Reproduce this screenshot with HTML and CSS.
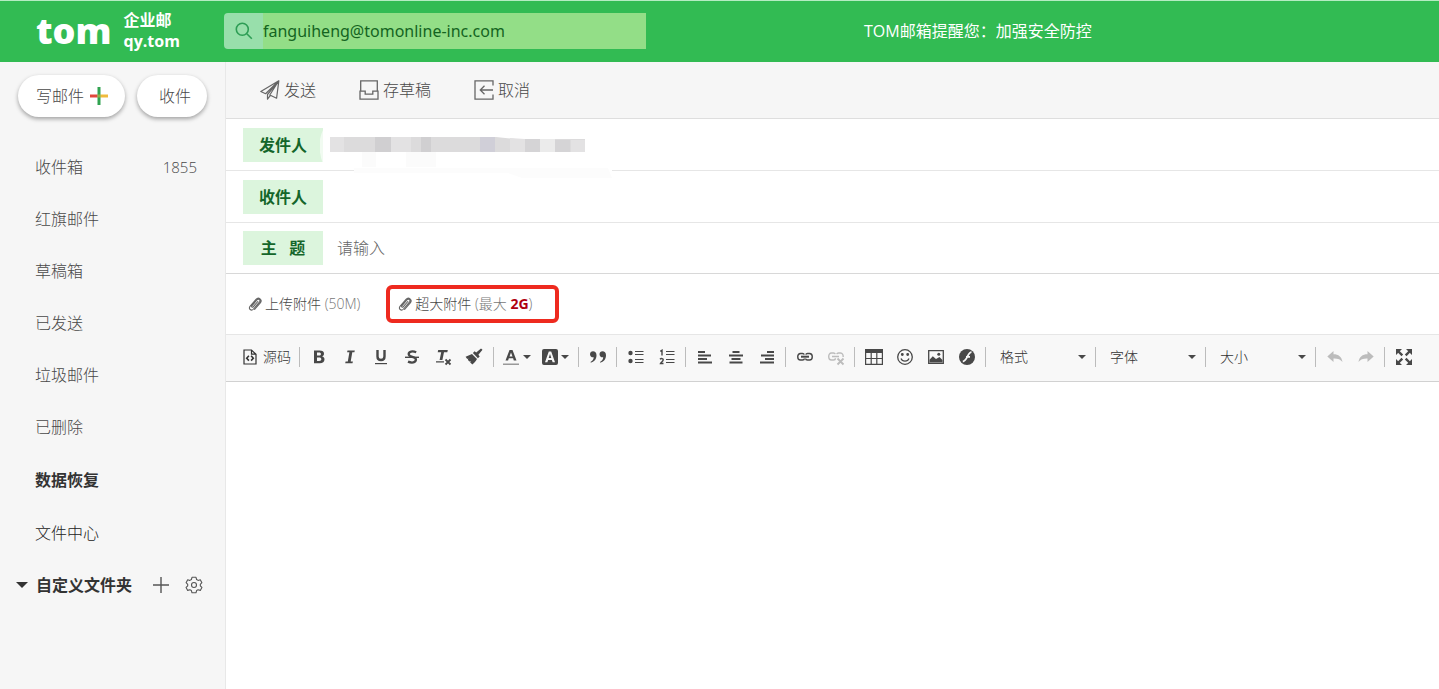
FILE: index.html
```html
<!DOCTYPE html>
<html lang="zh-CN">
<head>
<meta charset="utf-8">
<title>TOM企业邮 - 写邮件</title>
<link rel="stylesheet" href="styles.css">
</head>
<body>
<div class="app">
  <header class="header">
    <a class="brand" href="#">
      <span class="brand-logo">tom</span>
      <span class="brand-name"><span>企业邮</span><span>qy.tom</span></span>
    </a>
    <div class="search">
      <label class="search-icon" for="search">
        <svg width="18" height="18" viewBox="0 0 18 18" fill="none" stroke="currentColor" stroke-width="1.6" role="img" aria-label="搜索"><circle cx="7.3" cy="7.3" r="6"/><path d="M11.8 11.8l5 5"/></svg>
      </label>
      <input class="search-input" id="search" type="text" value="fanguiheng@tomonline-inc.com">
    </div>
    <p class="notice">TOM邮箱提醒您：加强安全防控</p>
  </header>

  <div class="body">
    <aside class="sidebar">
      <div class="side-actions">
        <button class="pill" type="button">写邮件
          <svg width="18" height="18" viewBox="0 0 18 18" aria-hidden="true"><path fill="#31a350" d="M7.5 0h3v18h-3z"/><path fill="#e2473d" d="M0 7.5h7.5v3H0z"/><path fill="#f0bb3c" d="M10.500 7.500h7.500v3h-7.500z"/><path fill="#8fae44" d="M7.500 7.500h3v3h-3z"/></svg>
        </button>
        <button class="pill pill-receive" type="button">收件</button>
      </div>
      <nav class="folders">
        <a class="folder" href="#">收件箱<span class="count">1855</span></a>
        <a class="folder" href="#">红旗邮件</a>
        <a class="folder" href="#">草稿箱</a>
        <a class="folder" href="#">已发送</a>
        <a class="folder" href="#">垃圾邮件</a>
        <a class="folder" href="#">已删除</a>
        <a class="folder folder-strong" href="#">数据恢复</a>
        <a class="folder folder-dark" href="#">文件中心</a>
      </nav>
      <div class="custom">
        <button class="custom-toggle" type="button">
          <svg width="12" height="6" viewBox="0 0 12 6" aria-hidden="true"><path d="M0 0h12L6 6z" fill="currentColor"/></svg>自定义文件夹
        </button>
        <button class="icon-btn" type="button" aria-label="新建文件夹">
          <svg width="16" height="16" viewBox="0 0 16 16" fill="none" stroke="currentColor" stroke-width="1.4"><path d="M8 0v16M0 8h16"/></svg>
        </button>
        <button class="icon-btn" type="button" aria-label="文件夹设置">
          <svg width="18" height="18" viewBox="0 0 18 18" fill="none" stroke="currentColor" stroke-width="1.1" stroke-linejoin="round"><path d="M7 1.300h4l.6 2.200 1.500.9 2.200-.7 1.600 3-1.600 1.600v1.500l1.600 1.600-1.600 3-2.200-.6-1.500.8-.6 2.200H7l-.6-2.200-1.500-.8-2.200.6-1.600-3 1.600-1.600V8.300L1.100 6.700l1.600-3 2.200.7 1.500-.9z"/><circle cx="9" cy="9" r="2.500"/></svg>
        </button>
      </div>
    </aside>

    <main class="main">
      <div class="actions">
        <button class="action" type="button">
          <svg width="20" height="20" viewBox="0 0 20 20" fill="none" stroke="currentColor" stroke-width="1.200" stroke-linejoin="round"><path d="M18.800.8L.8 11.500l4.800 2.200zM18.800.8L7.500 14.500v4.700l2.700-3.500M18.800.8l-2.200 17.400-6.800-3.200z"/></svg>发送
        </button>
        <button class="action" type="button">
          <svg width="20" height="20" viewBox="0 0 20 20" fill="none" stroke="currentColor" stroke-width="1.300"><path d="M1.700 11V.9h16.600V11M1 11.200h5.200v2.900h7.600v-2.900H19v8H1z"/></svg>存草稿
        </button>
        <button class="action" type="button">
          <svg width="20" height="20" viewBox="0 0 20 20" fill="none" stroke="currentColor" stroke-width="1.300"><path d="M19 5.500V.9H1v18.300h18v-4.700M19 10H6.500M10.500 5.800L6.300 10l4.200 4.200"/></svg>取消
        </button>
      </div>

      <div class="field">
        <span class="field-label">发件人</span>
        <svg class="masked" width="300" height="60" viewBox="0 0 300 60" role="img" aria-label="已隐藏的发件地址">
          <path fill="#fff" fill-opacity=".6" d="M3 10q-7 14 0 34z"/>
          <path fill="#fff" d="M34 48h258v6H34z"/>
          <path fill="#fbfbfb" d="M42 31h14v16H42zM86 31h30v16H86z"/>
          <path fill="#fcfcfc" d="M34 48h254l4 10h-90l-14-5H34z"/>
          <path fill="#dcdbdc" d="M10 17h166l20 2h69v13H10z"/>
          <path fill="#e3e2e3" d="M71 17h20v15H71zM10 17h14v15H10z"/>
          <path fill="#d0cfd1" d="M55 17h16v15H55zM101 17h10v15h-10z"/>
          <path fill="#d0cfd8" d="M160 17h15v15h-15z"/>
          <path fill="#e3e2e3" d="M190 18l15 1v13h-15zM251 20h14v12h-14z"/>
          <path fill="#ebebeb" d="M220 19h15v13h-15z"/>
          <path fill="#d5d4d6" d="M205 19h15v13h-15zM235 20h15v12h-15z"/>
        </svg>
      </div>
      <div class="field">
        <label class="field-label" for="to">收件人</label>
        <input class="field-input" id="to" type="text">
      </div>
      <div class="field field-last">
        <label class="field-label" for="subject">主&nbsp;&nbsp;&nbsp;题</label>
        <input class="field-input" id="subject" type="text" placeholder="请输入">
      </div>

      <div class="attachments">
        <button class="attach" type="button">
          <svg width="14" height="16" viewBox="0 0 14 16" fill="none" stroke="currentColor" stroke-width="1.100" stroke-linecap="round"><path d="M9.800 5.500l-4.600 5.300c-.9 1-2.100 0-1.300-1l5-5.800c1.700-1.900 4.100.1 2.500 2.100l-5.900 6.900c-2.200 2.500-5.500-.2-3.500-2.700L8 3.400c2.600-3 6.800.4 4.300 3.500l-5.700 6.600"/></svg>
          <span>上传附件 <span class="muted">(50M)</span></span>
        </button>
        <button class="attach attach-large" type="button">
          <svg width="14" height="16" viewBox="0 0 14 16" fill="none" stroke="currentColor" stroke-width="1.100" stroke-linecap="round"><path d="M9.800 5.500l-4.600 5.300c-.9 1-2.100 0-1.300-1l5-5.800c1.700-1.900 4.100.1 2.500 2.100l-5.900 6.900c-2.200 2.500-5.500-.2-3.500-2.700L8 3.400c2.600-3 6.800.4 4.300 3.500l-5.700 6.600"/></svg>
          <span>超大附件 <span class="muted">(最大 <strong class="limit">2G</strong>)</span></span>
        </button>
      </div>

      <div class="editor-bar">
        <div class="group group-source">
          <button class="tool tool-source" type="button">
            <svg width="14" height="16" viewBox="0 0 14 16" fill="none" stroke="currentColor" stroke-width="1.200"><path d="M1 1h7.500L13 5.200V15H1zM8.500 1v4.200H13"/><path stroke-width="1.600" d="M5.900 6.800L3.700 9.200l2.200 2.400M8.100 6.800l2.200 2.400-2.200 2.400"/></svg>源码
          </button>
        </div>
        <div class="group group-format">
          <button class="tool" type="button" aria-label="加粗"><svg width="16" height="16" viewBox="0 0 16 16"><path fill="currentColor" fill-rule="evenodd" d="M3 1.500h5.500c3 0 4.500 1.200 4.500 3.200 0 1.400-.8 2.300-1.900 2.700 1.500.3 2.400 1.400 2.400 2.900 0 2.600-1.800 3.900-4.700 3.900H3zm3 2.100v3h2c1.300 0 1.900-.5 1.900-1.500S9.300 3.600 8 3.600zm0 5v3.400h2.200c1.400 0 2.100-.6 2.100-1.700 0-1.100-.7-1.700-2.200-1.700z"/></svg></button>
          <button class="tool" type="button" aria-label="倾斜"><svg width="16" height="16" viewBox="0 0 16 16"><path fill="currentColor" d="M5.500 1.500h7.300l-.4 1.800h-2.100L8.700 12.400h2.200l-.4 1.800H3.200l.4-1.800h2.200l1.600-9.100H5.100z"/></svg></button>
          <button class="tool" type="button" aria-label="下划线"><svg width="16" height="16" viewBox="0 0 16 16"><path fill="none" stroke="currentColor" stroke-width="2.400" d="M4.500 1v6.500c0 2.500 1.200 3.500 3.500 3.500s3.500-1 3.500-3.500V1"/><path fill="currentColor" d="M2 14h12v1.200H2z"/></svg></button>
          <button class="tool" type="button" aria-label="删除线"><svg width="16" height="16" viewBox="0 0 16 16"><path fill="none" stroke="currentColor" stroke-width="2.300" d="M12.200 3.200C8.800 1.800 4.700 2.200 4.700 5c0 3.800 7.200 2 7.200 5.600 0 3.200-4.300 3.600-7.900 2"/><path fill="currentColor" d="M1 7.600h14V9H1z"/></svg></button>
          <button class="tool" type="button" aria-label="清除格式"><svg width="18" height="18" viewBox="0 0 18 18"><path fill="currentColor" d="M4.200 2h9.600l-.5 2.200H10L8.400 12H5.600l1.600-7.800H3.700zM2 13.300h8v1.200H2z"/><path fill="none" stroke="currentColor" stroke-width="1.800" d="M11.500 11.500l5 5M16.500 11.500l-5 5"/></svg></button>
          <button class="tool" type="button" aria-label="格式刷"><svg width="18" height="18" viewBox="0 0 18 18" fill="currentColor"><path d="M17.500 1.800L16 .4 11.200 4.600 9.600 3.200 7.900 5l5 5.200 1.800-1.700-1.300-1.700zM7 5.900L.6 8.700l1.600 2.200 1.200-.4-.6 1.200 1.500 1.800 1.500-.6-.7 1.400 2.200 2.300c1.500-1.300 3.400-3.100 4.700-5.600z"/></svg></button>
        </div>
        <div class="group">
          <button class="tool tool-menu" type="button" aria-label="文本颜色"><svg width="18" height="18" viewBox="0 0 18 18"><path fill="currentColor" fill-rule="evenodd" d="M7.500 2h3l4 10.500h-2.700l-.7-2.200H6.800l-.7 2.200H3.500zm1.500 2.600L7.500 8.500h3z"/><path fill="#999" d="M1 15.500h16v1.500H1z"/></svg><span class="caret"></span></button>
          <button class="tool tool-menu" type="button" aria-label="背景颜色"><svg width="16" height="16" viewBox="0 0 16 16"><path fill="currentColor" fill-rule="evenodd" d="M2 0h12q2 0 2 2v12q0 2-2 2H2q-2 0-2-2V2q0-2 2-2zm4.800 2.600L3 13.200h2.400l.7-2.200h3.800l.7 2.200H13L9.200 2.600zM8 5l1.300 4H6.700z"/></svg><span class="caret"></span></button>
        </div>
        <div class="group">
          <button class="tool" type="button" aria-label="块引用"><svg width="18" height="14" viewBox="0 0 18 14" fill="currentColor"><path d="M1 4.200C1 2.400 2.300 1.200 4 1.200c2 0 3.500 1.500 3.500 4.100 0 4-2.400 6.700-5.800 7.500v-1c1.800-.9 2.900-2.200 3-4.500C2.600 7.600 1 6.200 1 4.200zM10.500 4.200c0-1.800 1.300-3 3-3 2 0 3.500 1.500 3.500 4.100 0 4-2.400 6.700-5.800 7.500v-1c1.800-.9 2.900-2.200 3-4.500-2.100.3-3.700-1.100-3.700-3.100z"/></svg></button>
        </div>
        <div class="group">
          <button class="tool" type="button" aria-label="项目列表"><svg width="16" height="14" viewBox="0 0 16 14"><circle cx="2.500" cy="3" r="2.200" fill="currentColor"/><circle cx="2.500" cy="11" r="2.200" fill="currentColor"/><path fill="none" stroke="currentColor" stroke-width="1.100" d="M7 1.500h8.500M7 4.500h8.500M7 9.500h8.500M7 12.500h8.500"/></svg></button>
          <button class="tool" type="button" aria-label="编号列表"><svg width="16" height="16" viewBox="0 0 16 16" fill="none" stroke="currentColor" stroke-width="1.100"><path d="M7 2.500h8.500M7 5.500h8.500M7 10.500h8.500M7 13.500h8.500"/><path stroke-width="1.400" d="M1.300 2.300L3 1.200v5.300M1 10.200c1-1.100 3.400-.8 3.200.7C4 12.400 2 13.200 1.500 14.500h3"/></svg></button>
        </div>
        <div class="group">
          <button class="tool" type="button" aria-label="左对齐"><svg width="16" height="14" viewBox="0 0 16 14" stroke="currentColor" stroke-width="2"><path d="M1 2h7M1 5.500h13M1 9h9M1 12.500h14"/></svg></button>
          <button class="tool" type="button" aria-label="居中"><svg width="16" height="14" viewBox="0 0 16 14" stroke="currentColor" stroke-width="2"><path d="M4.500 2h7M1 5.500h14M3.500 9h9M1.500 12.500h13"/></svg></button>
          <button class="tool" type="button" aria-label="右对齐"><svg width="16" height="14" viewBox="0 0 16 14" stroke="currentColor" stroke-width="2"><path d="M8 2h7M2 5.500h13M6 9h9M1 12.500h14"/></svg></button>
        </div>
        <div class="group">
          <button class="tool" type="button" aria-label="插入链接"><svg width="18" height="18" viewBox="0 0 18 18" fill="none" stroke="currentColor"><path stroke-width="1.400" d="M8.200 6.700C8 5.900 7.400 5.500 6.500 5.500h-2c-3.700 0-3.700 6.500 0 6.500h2c1.200 0 1.900-.5 1.900-1.500M9.800 6.700c.2-.8.8-1.200 1.700-1.200h2c3.700 0 3.700 6.500 0 6.500h-2c-1.200 0-1.900-.5-1.900-1.500"/><path stroke-width="2" d="M5 8.700h8"/></svg></button>
          <button class="tool" type="button" aria-label="取消链接" disabled><svg width="18" height="18" viewBox="0 0 18 18" fill="none" stroke="currentColor"><path stroke-width="1.400" d="M8.200 6.200C8 5.400 7.400 5 6.500 5h-2c-3.700 0-3.700 7 0 7h2c1.200 0 1.900-.7 1.900-1.800M9.800 6.200c.2-.8.8-1.200 1.700-1.200h2c2 0 2.800 2 2.700 4M5 8.500h7"/><path stroke-width="1.800" d="M10.500 10.500l6 6M16.500 10.500l-6 6"/></svg></button>
        </div>
        <div class="group">
          <button class="tool" type="button" aria-label="表格"><svg width="18" height="16" viewBox="0 0 18 16"><path fill="currentColor" d="M0 0h18v4H0z"/><path fill="none" stroke="currentColor" stroke-width="1.200" d="M.6 3v12.400h16.800V3M6.200 4v11M11.800 4v11M0 9.500h18"/></svg></button>
          <button class="tool" type="button" aria-label="表情"><svg width="18" height="18" viewBox="0 0 18 18" fill="none" stroke="currentColor" stroke-width="1.300"><circle cx="9" cy="9" r="7.300"/><path d="M5 10.500c1.300 3.500 6.700 3.500 8 0"/><circle cx="6.300" cy="6.500" r=".8" fill="currentColor"/><circle cx="11.700" cy="6.500" r=".8" fill="currentColor"/></svg></button>
          <button class="tool" type="button" aria-label="图像"><svg width="16" height="14" viewBox="0 0 16 14"><path fill="none" stroke="currentColor" stroke-width="1.300" d="M.7.700h14.600v12.600H.7z"/><path fill="currentColor" d="M1.500 12.500V9.800l3.300-3.500L8 9l3.500-2 3 3v2.500z"/><circle cx="10.800" cy="4.200" r="1.500" fill="currentColor"/></svg></button>
          <button class="tool" type="button" aria-label="Flash"><svg width="16" height="16" viewBox="0 0 16 16"><circle cx="8" cy="8" r="8" fill="currentColor"/><path fill="none" stroke="#f8f8f8" stroke-width="1.800" d="M12.500 3.200C8.500 3.200 8.500 12 3.800 12.500M7 7.800h4"/></svg></button>
        </div>
        <div class="group group-select">
          <select class="picker" aria-label="格式"><option>格式</option></select><span class="caret"></span>
        </div>
        <div class="group group-select">
          <select class="picker" aria-label="字体"><option>字体</option></select><span class="caret"></span>
        </div>
        <div class="group group-select">
          <select class="picker" aria-label="大小"><option>大小</option></select><span class="caret"></span>
        </div>
        <div class="group">
          <button class="tool" type="button" aria-label="撤消" disabled><svg width="16" height="14" viewBox="0 0 16 14" fill="currentColor"><path d="M6.500 1v3.300c5 0 8.200 2.500 9 7.700-2-2.700-4.600-3.700-9-3.600V12L.3 6.500z"/></svg></button>
          <button class="tool" type="button" aria-label="重做" disabled><svg width="16" height="14" viewBox="0 0 16 14" fill="currentColor"><path d="M9.500 1v3.300c-5 0-8.200 2.500-9 7.700 2-2.700 4.600-3.700 9-3.600V12l6.200-5.500z"/></svg></button>
        </div>
        <div class="group">
          <button class="tool" type="button" aria-label="全屏"><svg width="16" height="16" viewBox="0 0 16 16"><path fill="currentColor" d="M0 0h6L0 6zM16 0v6l-6-6zM0 16v-6l6 6zM16 16h-6l6-6z"/><path fill="none" stroke="currentColor" stroke-width="2.400" d="M2 2l4.300 4.300M14 2L9.700 6.300M2 14l4.300-4.300M14 14L9.700 9.700"/></svg></button>
        </div>
      </div>
      <textarea class="editor" aria-label="邮件正文"></textarea>
    </main>
  </div>
</div>
</body>
</html>
```

FILE: styles.css
```css
* { box-sizing: border-box; }

body {
  margin: 0;
  color: #484848;
  font: 300 16px/24px "Open Sans", "Noto Sans CJK SC", sans-serif;
}

button, input, select, textarea {
  margin: 0;
  padding: 0;
  border: 0;
  background: none;
  color: inherit;
  font: inherit;
  outline: 0;
}

a { color: inherit; text-decoration: none; }
svg { display: block; flex: none; }

.app { display: flex; flex-direction: column; min-height: 100vh; }

.header {
  display: flex;
  align-items: center;
  height: 62px;
  padding-bottom: 1px;
  border-top: 1px solid #b5ecc2;
  background: #32bb53;
  color: #fff;
}

.brand { display: flex; align-items: center; gap: 12px; width: 224px; padding-left: 36px; font-weight: 700; }
.brand-logo { font-size: 36px; font-weight: 800; line-height: 48px; }
.brand-name { display: flex; flex-direction: column; line-height: 21px; }

.search { display: flex; width: 422px; height: 36px; color: #14641f; }
.search-icon { display: flex; align-items: center; justify-content: center; width: 39px; border-radius: 4px 0 0 4px; background: #98dfab; color: #2d9d55; }
.search-input { flex: 1; min-width: 0; background: #93de87; font-family: "Noto Sans", "Noto Sans CJK SC", sans-serif; font-weight: 400; }

.notice { margin: 0 0 0 218px; font-weight: 400; }

.body { display: flex; flex: 1; }

.sidebar { flex: none; width: 226px; border-right: 1px solid #e8e8e8; background: #f6f6f6; }
.side-actions { display: flex; gap: 12px; padding: 13px 18px 24px; }
.pill {
  display: flex;
  align-items: center;
  gap: 6px;
  height: 42px;
  padding: 0 17px 0 18px;
  border-radius: 21px;
  background: #fff;
  box-shadow: 0 2px 4px rgba(0, 0, 0, .35);
  white-space: nowrap;
}
.pill-receive { padding: 0 16px 0 22px; }

.folder { display: flex; align-items: center; justify-content: space-between; height: 52px; padding: 0 28px 0 35px; }
.folder-strong { height: 54px; color: #333; font-weight: 700; }
.folder-dark { color: #222; }
.count { font-size: 15px; }

.custom { display: flex; align-items: center; height: 52px; padding-left: 16px; color: #333; }
.custom-toggle { display: flex; align-items: center; gap: 8px; margin-right: 21px; font-weight: 700; }
.icon-btn { margin-right: 16px; color: #555; }

.main { display: flex; flex: 1; flex-direction: column; min-width: 0; background: #fff; }

.actions { display: flex; gap: 43px; height: 57px; padding-left: 34px; border-bottom: 1px solid #dedede; background: #f6f6f6; }
.action { display: flex; align-items: center; gap: 4px; }
.action svg { color: #666; }

.field { position: relative; display: flex; align-items: center; gap: 14px; height: 52px; padding-left: 17px; border-bottom: 1px solid #e6e6e6; }
.field-last { height: 51px; border-color: #d8d8d8; }
.field-label { width: 80px; height: 34px; background: #dcf5dd; color: #14662a; font-weight: 700; line-height: 34px; text-align: center; }
.field-input { flex: 1; min-width: 0; height: 34px; }
.field-input::placeholder { color: #666; opacity: 1; }
.masked { position: absolute; top: 1px; left: 94px; }

.attachments { display: flex; align-items: center; gap: 26px; height: 60px; padding-left: 22px; font-size: 14px; }
.attach { display: flex; align-items: center; gap: 3px; height: 38px; }
.attach svg { color: #666; }
.attach-large { padding: 0 23px 0 8px; border: 4px solid #ee2a1f; border-radius: 6px; }
.muted { color: #777; }
.limit { color: #b00010; font-weight: 700; }

.editor-bar { display: flex; align-items: center; height: 48px; padding: 0 0 2px 17px; border-top: 1px solid #e6e6e6; border-bottom: 1px solid #d1d1d1; background: #f8f8f8; color: #484848; font-size: 14px; }
.group { display: flex; align-items: center; flex: none; height: 20px; padding: 0 3px; border-left: 1px solid #bcbcbc; }
.group-source { padding: 0 8px 0 0; border-left: 0; }
.group-format { padding: 0 4px 0 3px; }
.tool { display: flex; align-items: center; justify-content: center; width: 31px; height: 24px; }
.tool:disabled { color: #bcbcbc; }
.tool-source { gap: 6px; width: auto; color: #333; }
.tool-menu { gap: 3px; width: 39px; }
.caret { border: 4px solid transparent; border-top-color: #484848; border-bottom: 0; }
.group-select { width: 110px; padding: 0 9px 0 14px; color: #333; }
.picker { flex: 1; min-width: 0; height: 24px; appearance: none; }

.editor { display: block; flex: 1; width: 100%; padding: 16px; resize: none; }
```
